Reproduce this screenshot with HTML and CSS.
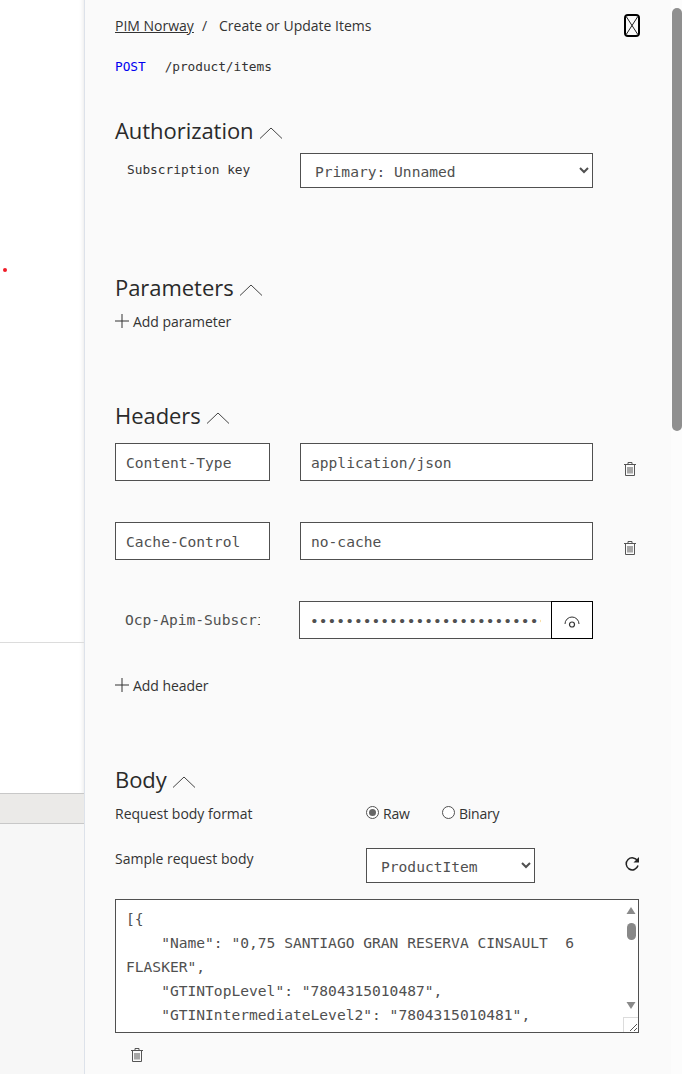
FILE: index.html
```html
<!DOCTYPE html>
<html lang="en">
<head>
<meta charset="utf-8">
<title>Create or Update Items</title>
<link rel="stylesheet" href="styles.css">
</head>
<body>
<div class="page">
  <div class="backdrop">
    <span class="dot"></span>
    <div class="back-top"></div>
    <div class="back-mid"></div>
    <div class="back-band"></div>
    <div class="back-bottom"></div>
  </div>
  <main class="panel">
    <div class="content">
      <header class="topbar">
        <nav class="crumbs"><a href="#" class="crumb-link">PIM Norway</a><span class="crumb-sep">/</span><span>Create or Update Items</span></nav>
        <button class="close" type="button" aria-label="Close">
          <svg width="16" height="23" viewBox="0 0 16 23"><rect x="1" y="1" width="14" height="21" rx="3" fill="none" stroke="#000" stroke-width="2"/><path d="M2.500 3 13.500 20M13.500 3 2.500 20" stroke="#222" stroke-width="1" fill="none"/></svg>
        </button>
      </header>
      <div class="endpoint"><span class="verb">POST</span><span>/product/items</span></div>

      <section class="sec-auth">
        <h2 class="sec-title">Authorization<svg class="chev" width="24" height="12" viewBox="0 0 24 12"><path d="M1 11.500 12 1l11 10.500" fill="none" stroke="#444" stroke-width="1"/></svg></h2>
        <div class="auth-row">
          <label class="auth-label">Subscription key</label>
          <select class="field select-wide"><option>Primary: Unnamed</option></select>
        </div>
      </section>

      <section class="sec-params">
        <h2 class="sec-title">Parameters<svg class="chev" width="24" height="12" viewBox="0 0 24 12"><path d="M1 11.500 12 1l11 10.500" fill="none" stroke="#444" stroke-width="1"/></svg></h2>
        <a href="#" class="add"><svg width="14" height="14" viewBox="0 0 14 14"><path d="M7 0v14M0 7h14" stroke="#333" stroke-width="1"/></svg>Add parameter</a>
      </section>

      <section class="sec-headers">
        <h2 class="sec-title">Headers<svg class="chev" width="24" height="12" viewBox="0 0 24 12"><path d="M1 11.500 12 1l11 10.500" fill="none" stroke="#444" stroke-width="1"/></svg></h2>
        <div class="header-row">
          <input class="field key" value="Content-Type">
          <input class="field val" value="application/json">
          <svg class="trash" width="14" height="16" viewBox="0 0 14 16"><g fill="none" stroke="#555" stroke-width="1"><path d="M1 3.500h12M5 3.500V1.500h4v2M2.500 3.500v11h9v-11M5 6v6.500M7 6v6.500M9 6v6.500"/></g></svg>
        </div>
        <div class="header-row">
          <input class="field key" value="Cache-Control">
          <input class="field val" value="no-cache">
          <svg class="trash" width="14" height="16" viewBox="0 0 14 16"><g fill="none" stroke="#555" stroke-width="1"><path d="M1 3.500h12M5 3.500V1.500h4v2M2.500 3.500v11h9v-11M5 6v6.500M7 6v6.500M9 6v6.500"/></g></svg>
        </div>
        <div class="header-row secret-row">
          <label class="secret-label"><span>Ocp-Apim-Subscription-Key</span></label>
          <div class="secret">
            <input class="secret-input" type="password" value="abcdefabcdefabcdefabcdefabcdefabcd">
            <button class="eye" type="button" aria-label="Show"><svg width="16" height="12" viewBox="0 0 16 12"><path d="M1 8a7 7 0 0 1 14 0" fill="none" stroke="#333" stroke-width="1"/><circle cx="8" cy="8.500" r="2.500" fill="none" stroke="#333" stroke-width="1.200"/></svg></button>
          </div>
        </div>
        <a href="#" class="add add-header"><svg width="14" height="14" viewBox="0 0 14 14"><path d="M7 0v14M0 7h14" stroke="#333" stroke-width="1"/></svg>Add header</a>
      </section>

      <section class="sec-body">
        <h2 class="sec-title">Body<svg class="chev" width="24" height="12" viewBox="0 0 24 12"><path d="M1 11.500 12 1l11 10.500" fill="none" stroke="#444" stroke-width="1"/></svg></h2>
        <div class="format-row">
          <span class="row-label">Request body format</span>
          <div class="radios">
            <label class="radio"><span class="radio-dot on"></span>Raw</label>
            <label class="radio"><span class="radio-dot"></span>Binary</label>
          </div>
        </div>
        <div class="sample-row">
          <span class="row-label sample-label">Sample request body</span>
          <select class="field select-small"><option>ProductItem</option></select>
          <svg class="refresh" width="16" height="16" viewBox="0 0 16 16"><path d="M13.500 5A6 6 0 1 0 14 9.500" fill="none" stroke="#222" stroke-width="1.500"/><path d="M15 1v5.500H9.500z" fill="#222"/></svg>
        </div>
        <div class="editor">
          <textarea class="code" spellcheck="false">[{
    "Name": "0,75 SANTIAGO GRAN RESERVA CINSAULT  6 FLASKER",
    "GTINTopLevel": "7804315010487",
    "GTINIntermediateLevel2": "7804315010481",
    "GTINIntermediateLevel1": "7804315010480",
    "GTINBaseLevel": "7804315010479"
}]</textarea>
          <div class="rail">
            <svg width="10" height="10" viewBox="0 0 10 10"><path d="M5 1 9.500 8H.5z" fill="#8a8a8a"/></svg>
            <span class="rail-thumb"></span>
            <svg class="rail-down" width="10" height="10" viewBox="0 0 10 10"><path d="M5 9 .5 2h9z" fill="#8a8a8a"/></svg>
          </div>
          <div class="grip"><svg width="14" height="14" viewBox="0 0 14 14"><path d="M6 13 13 6M10 13l3-3" stroke="#555" stroke-width="1" fill="none"/></svg></div>
        </div>
        <svg class="trash trash-body" width="14" height="16" viewBox="0 0 14 16"><g fill="none" stroke="#555" stroke-width="1"><path d="M1 3.500h12M5 3.500V1.500h4v2M2.500 3.500v11h9v-11M5 6v6.500M7 6v6.500M9 6v6.500"/></g></svg>
      </section>
    </div>
    <div class="scrollbar"><span class="scroll-thumb"></span></div>
  </main>
</div>
</body>
</html>
```
FILE: styles.css
```css
* { box-sizing: border-box; }
html, body { margin: 0; height: 100%; overflow: hidden; background: #fff; }
body { font-family: "Open Sans", "Noto Sans", sans-serif; color: #333; }

.page { display: flex; width: 682px; height: 1074px; overflow: hidden; }

/* left page behind the panel */
.backdrop { position: relative; width: 84px; flex: none; display: flex; flex-direction: column; background: #fff; box-shadow: inset -5px 0 5px -5px rgba(0,0,0,.12); }
.dot { position: absolute; left: 3px; top: 268px; width: 4px; height: 4px; border-radius: 50%; background: #f01c28; }
.back-top { height: 643px; border-bottom: 1px solid #dcdcdc; }
.back-mid { height: 151px; border-bottom: 1px solid #c8c8c8; }
.back-band { height: 30px; background: #ebeae8; border-bottom: 1px solid #c8c8c8; }
.back-bottom { flex: 1; background: #f7f7f7; }

/* panel */
.panel { flex: 1; display: flex; background: #fafafa; border-left: 1px solid #dde2ea; }
.content { width: 586px; flex: none; padding: 0 0 0 30px; }

.topbar { display: flex; justify-content: space-between; align-items: flex-start; width: 525px; height: 52px; padding-top: 14px; }
.crumbs { font-size: 14px; line-height: 24px; color: #333; }
.crumb-link { color: #333; text-decoration: underline; }
.crumb-sep { margin: 0 12px 0 8px; }
.close { width: 16px; height: 23px; padding: 0; border: 0; background: none; display: block; }
.close svg { display: block; }

.endpoint { display: flex; gap: 19px; font: 12.8px/20px "DejaVu Sans Mono", monospace; height: 20px; margin-top: 5px; color: #333; letter-spacing: -.05px; }
.verb { color: #0000f0; }

.sec-title { margin: 0; display: flex; align-items: center; gap: 5px; font-size: 22px; font-weight: 400; line-height: 30px; height: 30px; color: #2a2a2a; letter-spacing: -.05px; }
.chev { margin-top: 5px; }

.sec-auth { margin-top: 38px; }
.auth-row { display: flex; align-items: flex-start; margin-top: 8px; }
.auth-label { width: 185px; padding: 8px 0 0 12px; font: 12.8px/18px "DejaVu Sans Mono", monospace; color: #333; }

.field { display: block; background: #fff; border: 1px solid #505050; border-radius: 0; color: #505050; font: 14.6px "DejaVu Sans Mono", monospace; outline: none; }
.select-wide { width: 293px; height: 35px; padding: 2px 0 0 10px; }

.sec-params { margin-top: 84px; }
.add { display: flex; align-items: center; gap: 4px; height: 20px; font-size: 14px; color: #333; text-decoration: none; letter-spacing: -.05px; }
.sec-params .add { margin-top: 9px; }

.sec-headers { margin-top: 69px; }
.header-row { display: flex; align-items: flex-start; height: 38px; margin-top: 41px; }
.sec-title + .header-row { margin-top: 13px; }
.key { width: 155px; height: 38px; padding: 0 10px; }
.val { width: 293px; height: 38px; padding: 0 10px; margin-left: 30px; }
.trash { display: block; flex: none; }
.header-row .trash { margin: 18px 0 0 30px; }

.secret-row { align-items: center; }
.secret-label { display: block; width: 135px; margin-left: 10px; padding-bottom: 2px; overflow: hidden; white-space: nowrap; font: 14.6px "DejaVu Sans Mono", monospace; color: #505050; }
.secret { display: flex; width: 294px; height: 38px; margin-left: 39px; }
.secret-input { flex: 1; min-width: 0; height: 38px; padding: 0 10px; border: 1px solid #505050; border-right: 0; background: #fff; color: #505050; font: 14.6px "DejaVu Sans Mono", monospace; outline: none; }
.eye { width: 42px; height: 38px; padding: 4px 0 0; border: 1px solid #000; background: #fff; display: flex; align-items: center; justify-content: center; }

.add-header { margin-top: 36px; }

.sec-body { margin-top: 69px; }
.format-row { display: flex; margin-top: 7px; height: 24px; align-items: center; }
.row-label { font-size: 14px; color: #333; }
.format-row .row-label { width: 251px; }
.radios { display: flex; gap: 18px; }
.radio { display: flex; align-items: center; gap: 4px; font-size: 14px; letter-spacing: -.25px; color: #333; width: 58px; }
.radio-dot { width: 13px; height: 13px; border: 1px solid #505050; border-radius: 50%; background: #fff; position: relative; margin-top: -1px; }
.radio-dot.on::after { content: ""; position: absolute; inset: 2px; border-radius: 50%; background: #666; }

.sample-row { display: flex; margin-top: 23px; height: 35px; align-items: flex-start; }
.sample-label { width: 251px; line-height: 20px; padding-top: 1px; }
.select-small { width: 169px; height: 35px; padding: 2px 0 0 10px; }
.refresh { margin: 8px 0 0 89px; }

.editor { position: relative; width: 524px; height: 134px; margin-top: 16px; }
.code { display: block; width: 524px; height: 134px; padding: 7px 10px 5px; border: 1px solid #505050; border-radius: 0; background: #fff; color: #505050; font: 14.6px/24px "DejaVu Sans Mono", monospace; overflow: hidden; resize: none; outline: none; }
.rail { position: absolute; right: 3px; top: 7px; width: 10px; height: 104px; display: flex; flex-direction: column; align-items: center; }
.rail svg { display: block; flex: none; }
.rail-thumb { width: 9px; height: 17px; margin-top: 7px; border-radius: 4.5px; background: #888; }
.rail-down { margin-top: auto; }
.grip { position: absolute; right: 1px; bottom: 1px; width: 15px; height: 15px; background: #fff; border: 1px solid #dcdcdc; border-width: 1px 0 0 1px; }
.grip svg { display: block; }
.trash-body { margin: 14px 0 0 15px; }

.scrollbar { margin-left: auto; width: 11px; padding: 8px 0 0 1px; background: #fcfcfc; }
.scroll-thumb { display: block; width: 10px; height: 423px; border-radius: 5px; background: #8f8f8f; }
```
